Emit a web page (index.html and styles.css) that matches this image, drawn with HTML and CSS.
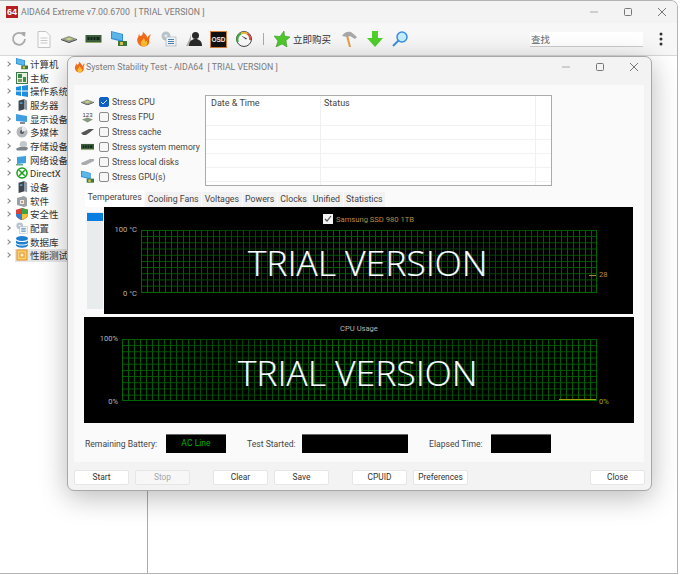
FILE: index.html
```html
<!DOCTYPE html>
<html lang="en">
<head>
    <meta charset="UTF-8">
    <meta name="viewport" content="width=device-width, initial-scale=1.0">
    <title>AIDA64 Extreme</title>
    <link rel="stylesheet" href="styles.css">
</head>
<body>
    <svg class="defs" width="0" height="0">
        <symbol id="flame" viewBox="0 0 16 16">
            <path d="M7 0C8 3 6 5 4 5 4 4 4 3 3 3 3 6 0 8 2 12c1 3 4 4 6 4 4 0 7-3 6-7 0-2 1-4 2-6-2 1-3 2-4 4 0-3-3-5-5-7z" fill="#f26a1b"/>
            <path d="M8 7c0 2-3 3-3 6 0 2 2 3 3 3 2 0 4-1 4-4 0-1 0-2-1-2 0 1-1 1-1 1 0-2-1-3-2-4z" fill="#fbc02d"/>
        </symbol>
        <symbol id="chip" viewBox="0 0 16 8">
            <path d="M0 4 8 1l8 3-8 3z" fill="#8f9a88"/>
            <path d="M4 4 8 2.500 12 4 8 5.500z" fill="#c8cf8a"/>
            <path d="M0 4l8 3 8-3v1L8 8 0 5z" fill="#3a3a3a"/>
        </symbol>
        <symbol id="ram" viewBox="0 0 16 8">
            <rect y="0" width="16" height="7" fill="#3c5f3c"/>
            <path d="M2 2h2v3H2zM5 2h2v3H5zM8 2h2v3H8zM11 2h3v3h-3z" fill="#15241a"/>
            <rect y="7" width="16" height="1" fill="#9aa86a"/>
        </symbol>
        <symbol id="monitor" viewBox="0 0 16 16">
            <path d="M0 0l12 3v8L0 8z" fill="#2f8fd6"/>
            <path d="M1 1l10 2.500v6L1 7z" fill="#5bb6ea"/>
            <rect x="7" y="10" width="9" height="5" fill="#3d7a3d"/>
            <rect x="9" y="11" width="3" height="3" fill="#d8c25a"/>
        </symbol>
        <symbol id="gear" viewBox="0 0 16 16">
            <circle cx="5" cy="5" r="4.500" fill="#b9c3cc"/>
            <circle cx="5" cy="5" r="1.500" fill="#eef1f3"/>
            <rect x="5" y="6" width="10" height="9" fill="#f4f6f8" stroke="#9fb0bd" stroke-width=".6"/>
            <path d="M7 8.500h6M7 10.500h6M7 12.500h6" stroke="#4a84b8"/>
        </symbol>
        <symbol id="box" viewBox="0 0 12 14">
            <path d="M2 2l7-2v12l-7 2z" fill="#3b4650"/>
            <path d="M9 0l3 2v11l-3-1z" fill="#8d99a3"/>
            <rect x="3.500" y="4" width="3" height="1.500" fill="#6cb6e8"/>
        </symbol>
    </svg>

    <div class="app">
        <header class="titlebar">
            <span class="logo">64</span>
            <span class="title-text">AIDA64 Extreme v7.00.6700&nbsp;&nbsp;[ TRIAL VERSION ]</span>
            <span class="controls">
                <svg width="10" height="10" viewBox="0 0 10 10"><path d="M1 5h8" stroke="#aaa"/></svg>
                <svg width="10" height="10" viewBox="0 0 10 10"><rect x="1.500" y="1.500" width="7" height="7" rx="1" fill="none" stroke="#777"/></svg>
                <svg width="10" height="10" viewBox="0 0 10 10"><path d="M1 1l8 8M9 1l-8 8" stroke="#777"/></svg>
            </span>
        </header>

        <nav class="toolbar">
            <span class="slot"><svg width="16" height="16" viewBox="0 0 16 16"><path d="M13 4.500A6 6 0 1 0 14 8" fill="none" stroke="#a9a9a9" stroke-width="1.800"/><path d="M10 1l4.500 0-.5 5z" fill="#a9a9a9"/></svg></span>
            <span class="slot"><svg width="14" height="17" viewBox="0 0 14 17"><path d="M1 .5h8l4 4v12H1z" fill="#fbfbfb" stroke="#c4c4c4"/><path d="M3.500 7h7M3.500 9.500h7M3.500 12h7" stroke="#c8c8c8"/></svg></span>
            <span class="slot"><svg width="16" height="8"><use href="#chip"/></svg></span>
            <span class="slot"><svg width="17" height="8"><use href="#ram"/></svg></span>
            <span class="slot"><svg width="16" height="16"><use href="#monitor"/></svg></span>
            <span class="slot"><svg width="15" height="16"><use href="#flame"/></svg></span>
            <span class="slot"><svg width="16" height="16"><use href="#gear"/></svg></span>
            <span class="slot"><svg width="16" height="14" viewBox="0 0 16 14"><path d="M5 2 3 8l-3 6h5z" fill="#b5b5b5"/><circle cx="9.500" cy="3.500" r="3.500" fill="#2a2a2a"/><path d="M3 14c0-5 3-7 6.500-7S16 9 16 14z" fill="#2a2a2a"/></svg></span>
            <span class="slot"><span class="osd">OSD</span></span>
            <span class="slot"><svg width="16" height="16" viewBox="0 0 16 16"><circle cx="8" cy="8" r="7.500" fill="#fafafa" stroke="#444"/><path d="M2 11A6.500 6.500 0 0 1 5 2.500" fill="none" stroke="#3fae3f" stroke-width="2"/><path d="M5 2.500A6.500 6.500 0 0 1 11.500 2.800" fill="none" stroke="#e8b23a" stroke-width="2"/><path d="M11.500 2.800A6.500 6.500 0 0 1 14 9" fill="none" stroke="#d8503a" stroke-width="2"/><path d="M5 4.500l6 3-1 1z" fill="#333"/></svg></span>
            <span class="tool-sep"></span>
            <svg class="star" width="16" height="16" viewBox="0 0 16 16"><path d="M10 0l.5 5 5.500 1-4 3.500L13 16l-5-3-6 3 2-6L0 5l6 .5z" fill="#4fc92c" stroke="#2f8a1a" stroke-width=".5"/></svg>
            <span class="buy">立即购买</span>
            <span class="slot"><svg width="15" height="16" viewBox="0 0 15 16"><path d="M4 5l2-1 3 12H7z" fill="#e2a24a"/><path d="M0 5c2-4 6-5 9-4l6 5-2 2-5-3-3 1z" fill="#a8a8a8"/></svg></span>
            <span class="slot"><svg width="16" height="16" viewBox="0 0 16 16"><path d="M5 0h6v7h5l-8 9-8-9h5z" fill="#4fcf2a"/></svg></span>
            <span class="slot"><svg width="16" height="16" viewBox="0 0 16 16"><circle cx="10" cy="6" r="5" fill="#c4eefc" stroke="#3b8fe0" stroke-width="1.500"/><path d="M6.500 9.500 1 15" stroke="#3b8fe0" stroke-width="2"/></svg></span>
            <input class="search" type="text" value="查找">
            <svg class="more" width="4" height="14" viewBox="0 0 4 14"><circle cx="2" cy="2" r="1.500"/><circle cx="2" cy="7" r="1.500"/><circle cx="2" cy="12" r="1.500"/></svg>
        </nav>

        <div class="workspace">
            <ul class="tree">
                <li><i class="chev"></i><svg width="12" height="12"><use href="#monitor"/></svg><span>计算机</span></li>
                <li><i class="chev"></i><svg width="12" height="12" viewBox="0 0 12 12"><rect x=".5" y=".5" width="11" height="11" fill="#e8f0e0" stroke="#3d7a4a"/><rect x="2" y="2" width="4" height="4" fill="#3d8a4a"/><rect x="7" y="5" width="3" height="5" fill="#3d8a4a"/><rect x="2" y="7" width="4" height="3" fill="#7a9a6a"/></svg><span>主板</span></li>
                <li><i class="chev"></i><svg width="12" height="12" viewBox="0 0 12 12"><path d="M0 2l5-1v4.500H0zM6 1l6-1v5.500H6zM0 6.500h5V11l-5-1zM6 6.500h6V12l-6-1z" fill="#1e8fe0"/></svg><span>操作系统</span></li>
                <li><i class="chev"></i><svg width="12" height="12"><use href="#box"/></svg><span>服务器</span></li>
                <li><i class="chev"></i><svg width="12" height="12" viewBox="0 0 12 12"><path d="M0 1l11 2v6L0 8z" fill="#3f9fe0"/><path d="M4 9h5v2H4z" fill="#888"/></svg><span>显示设备</span></li>
                <li><i class="chev"></i><svg width="12" height="12" viewBox="0 0 12 12"><circle cx="6" cy="6" r="5.500" fill="#b4b8bb"/><circle cx="6" cy="6" r="2" fill="#55595c"/><path d="M6 .5A5.500 5.500 0 0 1 11 4L6 6z" fill="#e6e8ea"/></svg><span>多媒体</span></li>
                <li><i class="chev"></i><svg width="12" height="12" viewBox="0 0 13 12"><ellipse cx="8" cy="4" rx="4" ry="3.500" fill="#c4c8cb"/><path d="M0 9l4-2h8l1 2-2 2H1z" fill="#7d8387"/></svg><span>存储设备</span></li>
                <li><i class="chev"></i><svg width="12" height="12" viewBox="0 0 12 12"><path d="M1 3l9-1v7l-9 1z" fill="#3f9fe0"/><path d="M0 10h7v1.500H0z" fill="#6a8"/></svg><span>网络设备</span></li>
                <li><i class="chev"></i><svg width="12" height="12" viewBox="0 0 13 13"><circle cx="6.500" cy="6.500" r="5.500" fill="#fff" stroke="#14a014" stroke-width="1.600"/><path d="M3.500 3.500l6 6M9.500 3.500l-6 6" stroke="#14a014" stroke-width="1.600"/></svg><span class="latin">DirectX</span></li>
                <li><i class="chev"></i><svg width="12" height="12"><use href="#box"/></svg><span>设备</span></li>
                <li><i class="chev"></i><svg width="12" height="12" viewBox="0 0 12 12"><path d="M1 3l7-2 3 2v8l-3 1-7-2z" fill="#9aa0a4"/><path d="M4 5h4v4H4z" fill="#e8eaec"/><path d="M5 6h2v2H5z" fill="#c96"/></svg><span>软件</span></li>
                <li><i class="chev"></i><svg width="12" height="12" viewBox="0 0 13 13"><path d="M6.500 0 13 2v5c0 3-3 5-6.500 6C3 12 0 10 0 7V2z" fill="#d8423a"/><path d="M6.500 0 13 2v4.500H6.500z" fill="#3fa33f"/><path d="M0 6.500h6.500V13C3 12 0 10 0 7z" fill="#2f7fd6"/><path d="M6.500 6.500H13c0 3-3 5.500-6.500 6.500z" fill="#f2c230"/></svg><span>安全性</span></li>
                <li><i class="chev"></i><svg width="12" height="12"><use href="#gear"/></svg><span>配置</span></li>
                <li><i class="chev"></i><svg width="12" height="12" viewBox="0 0 12 12"><ellipse cx="6" cy="2.500" rx="6" ry="2.500" fill="#1f7fd0"/><path d="M0 4.500c2 2 10 2 12 0V7c-2 2-10 2-12 0zM0 8c2 2 10 2 12 0v1.500c-2 3-10 3-12 0z" fill="#1f7fd0"/></svg><span>数据库</span></li>
                <li class="selected"><i class="chev"></i><svg width="12" height="12" viewBox="0 0 12 12"><rect x="1" y="1" width="10" height="10" fill="#f8d070" stroke="#e89020"/><rect x="4" y="4" width="4" height="4" fill="#fff3d0" stroke="#e89020"/></svg><span>性能测试</span></li>
            </ul>
            <main class="content"></main>
        </div>
    </div>

    <section class="dialog">
        <header class="dialog-title">
            <svg width="11" height="12"><use href="#flame"/></svg>
            <span class="title-text">System Stability Test - AIDA64&nbsp;&nbsp;[ TRIAL VERSION ]</span>
            <span class="controls">
                <svg width="10" height="10" viewBox="0 0 10 10"><path d="M1 5h8" stroke="#aaa"/></svg>
                <svg width="10" height="10" viewBox="0 0 10 10"><rect x="1.500" y="1.500" width="7" height="7" rx="1" fill="none" stroke="#777"/></svg>
                <svg width="10" height="10" viewBox="0 0 10 10"><path d="M1 1l8 8M9 1l-8 8" stroke="#777"/></svg>
            </span>
        </header>

        <div class="panel">
            <div class="top-row">
                <ul class="stress-list">
                    <li><svg width="13" height="7"><use href="#chip"/></svg><b class="check on"><svg width="8" height="8" viewBox="0 0 8 8"><path d="M1 4l2 2 4-4" fill="none" stroke="#cfe6fa"/></svg></b><span>Stress CPU</span></li>
                    <li><svg width="13" height="13" viewBox="0 0 13 13"><text x="6.500" y="6" class="num">123</text><path d="M1 9l5.500-2L12 9l-5.500 3z" fill="#8a9a80"/></svg><b class="check"></b><span>Stress FPU</span></li>
                    <li><svg width="13" height="6" viewBox="0 0 13 6"><path d="M0 4l8-4h5L8 4l-3 2H2z" fill="#555"/></svg><b class="check"></b><span>Stress cache</span></li>
                    <li><svg width="13" height="7"><use href="#ram"/></svg><b class="check"></b><span>Stress system memory</span></li>
                    <li><svg width="13" height="6" viewBox="0 0 13 6"><path d="M0 4l9-4h4v2L5 6H1z" fill="#a8acaf"/></svg><b class="check"></b><span>Stress local disks</span></li>
                    <li><svg width="13" height="13"><use href="#monitor"/></svg><b class="check"></b><span>Stress GPU(s)</span></li>
                </ul>
                <div class="log">
                    <div class="log-head"><span class="col-date">Date &amp; Time</span><span>Status</span></div>
                </div>
            </div>

            <div class="tabs">
                <span class="tab active">Temperatures</span>
                <span class="tab">Cooling Fans</span>
                <span class="tab">Voltages</span>
                <span class="tab">Powers</span>
                <span class="tab">Clocks</span>
                <span class="tab">Unified</span>
                <span class="tab">Statistics</span>
            </div>

            <div class="temp-row">
                <div class="scroller"><span class="scroller-thumb"></span></div>
                <div class="chart chart-temp">
                    <div class="chart-title temp-title">
                        <b class="mini-check"><svg width="8" height="8" viewBox="0 0 8 8"><path d="M1 4l2 2 4-5" fill="none" stroke="#555" stroke-width="1.200"/></svg></b>
                        <span>Samsung SSD 980 1TB</span>
                    </div>
                    <div class="plot-row">
                        <div class="axis"><span>100 °C</span><span>0 °C</span></div>
                        <div class="plot"><span class="trial">TRIAL VERSION</span><i class="mark-temp"></i></div>
                        <div class="side side-temp">28</div>
                    </div>
                </div>
            </div>

            <div class="chart chart-cpu">
                <div class="chart-title">CPU Usage</div>
                <div class="plot-row">
                    <div class="axis"><span>100%</span><span>0%</span></div>
                    <div class="plot"><span class="trial">TRIAL VERSION</span><i class="mark-cpu"></i></div>
                    <div class="side side-cpu">0%</div>
                </div>
            </div>

            <div class="status-row">
                <label class="l-battery">Remaining Battery:</label><span class="readout r-battery">AC Line</span>
                <label class="l-started">Test Started:</label><span class="readout r-started"></span>
                <label class="l-elapsed">Elapsed Time:</label><span class="readout r-elapsed"></span>
            </div>
        </div>

        <footer class="button-row">
            <button>Start</button>
            <button disabled>Stop</button>
            <button class="group-start">Clear</button>
            <button>Save</button>
            <button class="group-start">CPUID</button>
            <button>Preferences</button>
            <button class="close-btn">Close</button>
        </footer>
    </section>
</body>
</html>
```

FILE: styles.css
```css
* {
    box-sizing: border-box;
}
html, body {
    margin: 0;
    height: 100%;
    overflow: hidden;
}
body {
    width: 680px;
    height: 575px;
    background-color: #fff;
    color: #444;
    font-family: Roboto, "Noto Sans CJK SC", sans-serif;
    font-size: 8.600px;
    position: relative;
}
ul {
    list-style: none;
    margin: 0;
    padding: 0;
}
svg {
    display: block;
    flex: none;
}
.defs {
    position: absolute;
}

/* main window */
.app {
    width: 678px;
    height: 574px;
    border: 1px solid #b4b4b4;
    border-left: none;
    border-radius: 0 7px 0 0;
    display: flex;
    flex-direction: column;
    overflow: hidden;
}
.titlebar {
    height: 22px;
    flex: none;
    background-color: #f3f3f3;
    display: flex;
    align-items: center;
    padding: 0 0 1px 6px;
}
.logo {
    width: 12px;
    height: 12px;
    background-color: #b3201f;
    color: #fff;
    font-family: "Liberation Sans", sans-serif;
    font-size: 9px;
    font-weight: bold;
    line-height: 12px;
    text-align: center;
    margin-right: 3px;
}
.title-text {
    color: #7a7a7a;
    font-size: 8.750px;
    white-space: nowrap;
}
.controls {
    margin-left: auto;
    display: flex;
    gap: 24px;
    padding-right: 10px;
}
.toolbar {
    height: 33px;
    flex: none;
    background-color: #f7f7f7;
    border-bottom: 1px solid #d8d8d8;
    display: flex;
    align-items: center;
    padding-left: 6px;
}
.slot {
    width: 25px;
    flex: none;
    display: flex;
    justify-content: center;
    align-items: center;
}
.osd {
    width: 17px;
    height: 17px;
    background-color: #111;
    border: 1px solid #d8813a;
    color: #eee;
    font-family: "Liberation Sans", sans-serif;
    font-size: 6.500px;
    font-weight: bold;
    line-height: 15px;
    text-align: center;
}
.tool-sep {
    width: 1px;
    height: 12px;
    background-color: #aaa;
    margin: 0 10px 0 7px;
}
.star {
    margin-right: 3px;
}
.buy {
    font-family: "Noto Sans CJK SC", sans-serif;
    font-size: 9.500px;
    color: #333;
    width: 44px;
    white-space: nowrap;
}
.search {
    width: 113px;
    height: 15px;
    margin-left: 118px;
    border: none;
    border-bottom: 1px solid #ccc;
    padding: 0 1px;
    background-color: #fff;
    color: #666;
    font-family: "Noto Sans CJK SC", sans-serif;
    font-size: 9.500px;
}
.more {
    margin-left: 16px;
    fill: #333;
}
.workspace {
    flex: 1;
    display: flex;
}
.tree {
    width: 148px;
    flex: none;
    padding-top: 1px;
    background-color: #fff;
    border-right: 1px solid #aaa;
}
.tree li {
    height: 13.700px;
    display: flex;
    align-items: center;
    gap: 2px;
    padding-left: 6px;
    color: #333;
    font-family: "Noto Sans CJK SC", sans-serif;
    font-size: 9.500px;
    white-space: nowrap;
}
.tree .latin {
    font-family: Roboto, sans-serif;
    font-size: 9.500px;
}
.tree .selected {
    background: linear-gradient(#e6e6e6, #e6e6e6) 15px 0 / 60px 100% no-repeat;
}
.chev {
    width: 4px;
    height: 4px;
    border-top: 1px solid #888;
    border-right: 1px solid #888;
    transform: rotate(45deg);
    margin-right: 4px;
    flex: none;
}
.content {
    flex: 1;
    background-color: #fff;
}

/* stability test window */
.dialog {
    position: absolute;
    left: 67px;
    top: 56px;
    width: 585px;
    height: 435px;
    background-color: #f3f3f3;
    border: 1px solid #a8a8a8;
    border-radius: 7px;
    box-shadow: 0 6px 28px rgba(0, 0, 0, 0.28);
    padding: 0 6px;
    display: flex;
    flex-direction: column;
}
.dialog-title {
    height: 28px;
    flex: none;
    display: flex;
    align-items: center;
    gap: 1px;
    padding-bottom: 9px;
}
.dialog-title .controls {
    padding-right: 6px;
}
.panel {
    height: 377px;
    flex: none;
    background-color: #fafafa;
    padding: 10px 11px 0;
    margin-right: 1px;
}
.top-row {
    display: flex;
    height: 95px;
}
.stress-list {
    width: 120px;
    flex: none;
}
.stress-list li {
    height: 15px;
    display: flex;
    align-items: center;
    white-space: nowrap;
    position: relative;
    top: -1px;
    padding-left: 14px;
}
.stress-list li > svg {
    position: absolute;
    left: -4px;
    top: 50%;
    transform: translateY(-50%);
}
.num {
    font-family: "Liberation Sans", sans-serif;
    font-size: 6px;
    fill: #444;
    text-anchor: middle;
}
.check {
    width: 10px;
    height: 10px;
    border: 1px solid #8a8a8a;
    border-radius: 2px;
    background-color: #f6f6f6;
    margin-right: 3px;
    flex: none;
}
.check.on {
    background-color: #0f62c4;
    border-color: #0f62c4;
}
.log {
    width: 347px;
    height: 91px;
    background-color: #fff;
    border: 1px solid #ababab;
    background-image: linear-gradient(90deg, transparent 114px, #f0f0f0 114px, #f0f0f0 115px, transparent 115px, transparent 329px, #f0f0f0 329px, #f0f0f0 330px, transparent 330px),
        repeating-linear-gradient(#fff 0, #fff 13px, #f2f2f2 13px, #f2f2f2 14px);
    background-position: 0 0, 0 16px;
    background-repeat: no-repeat;
}
.log-head {
    display: flex;
    padding: 2px 0 0 5px;
    font-size: 9px;
}
.col-date {
    width: 113px;
}
.tabs {
    display: flex;
    align-items: flex-end;
    height: 17px;
    gap: 1px;
}
.tab {
    height: 15px;
    line-height: 15px;
    padding: 0 2.500px;
    background-color: #f2f2f2;
    color: #444;
    font-size: 8.800px;
    white-space: nowrap;
}
.tab.active {
    height: 17px;
    line-height: 15px;
    background-color: #fff;
}
.temp-row {
    display: flex;
    align-items: center;
    margin-left: 19px;
    position: relative;
}
.scroller {
    position: absolute;
    left: -17px;
    top: 5px;
    width: 16px;
    height: 97px;
    background-color: #e8ecec;
}
.scroller-thumb {
    display: block;
    height: 8px;
    margin: 1px 0;
    background-color: #0a7ee0;
}

/* charts */
.chart {
    background-color: #000;
    color: #b5b5b5;
    font-size: 7.600px;
}
.chart-temp {
    width: 530px;
    height: 107px;
}
.chart-cpu {
    width: 550px;
    height: 106px;
    margin: 3px 0 0 -1px;
}
.chart-title {
    height: 22px;
    display: flex;
    align-items: center;
    justify-content: center;
    gap: 3px;
    padding-top: 1px;
}
.temp-title {
    height: 23px;
    color: #b98a45;
}
.mini-check {
    width: 10px;
    height: 10px;
    background-color: #f3f3f3;
    padding: 1px;
}
.plot-row {
    display: flex;
}
.chart-temp .plot-row {
    height: 63px;
}
.chart-cpu .plot-row {
    height: 62px;
}
.chart-temp .plot {
    width: 456px;
}
.chart-cpu .plot {
    width: 475px;
}
.plot {
    flex: none;
    display: flex;
    align-items: center;
    justify-content: center;
    position: relative;
    background-image: linear-gradient(90deg, transparent, rgba(0, 0, 0, 0.3) 25%, transparent 45%, rgba(0, 0, 0, 0.3) 75%, transparent),
        linear-gradient(#006600 1px, transparent 1px),
        linear-gradient(90deg, #006600 1px, transparent 1px);
    background-size: 100% 100%, 6px 6.200px, 6px 6.200px;
    border-right: 1px solid #006600;
    border-bottom: 1px solid #006600;
}
.axis {
    width: 37px;
    flex: none;
    margin: -5px 0;
    padding-right: 4px;
    display: flex;
    flex-direction: column;
    justify-content: space-between;
    align-items: flex-end;
}
.chart-cpu .axis {
    width: 38px;
}
.trial {
    color: #fff;
    font-family: "Open Sans", sans-serif;
    font-size: 35.500px;
    font-weight: 300;
    line-height: 1;
    white-space: nowrap;
    text-shadow: 1px 0 rgba(90, 170, 220, 0.5);
}
.chart-cpu .trial {
    margin: 6px 3px 0 0;
}
.chart-temp .trial {
    margin: 4px 2px 0 0;
}
.mark-temp, .mark-cpu {
    position: absolute;
    height: 1px;
    right: 0;
}
.mark-temp {
    width: 7px;
    top: 45px;
    background-color: #a8803f;
}
.mark-cpu {
    width: 37px;
    bottom: 0;
    background-color: #a0a000;
}
.side {
    padding-left: 2px;
}
.side-temp {
    padding-top: 40px;
    color: #b98a45;
}
.side-cpu {
    padding-top: 58px;
    color: #a0a000;
}

/* status and buttons */
.status-row {
    display: flex;
    align-items: center;
    height: 19px;
    margin-top: 11px;
    white-space: nowrap;
}
.l-battery {
    width: 81px;
}
.l-started {
    width: 55px;
    margin-left: 21px;
}
.l-elapsed {
    width: 62px;
    margin-left: 21px;
}
.readout {
    height: 19px;
    background-color: #000;
    border-top: 1px solid #666;
    color: #00b000;
    text-align: center;
    line-height: 17px;
}
.r-battery, .r-elapsed {
    width: 60px;
}
.r-started {
    width: 106px;
}
.button-row {
    display: flex;
    gap: 6px;
    margin-top: 8px;
}
button {
    width: 55px;
    height: 15px;
    padding: 0;
    background-color: #fff;
    border: 1px solid #e6e6e6;
    border-radius: 2px;
    color: #333;
    font-family: Roboto, sans-serif;
    font-size: 8.400px;
    line-height: 13px;
}
button:disabled {
    background-color: #f7f7f7;
    color: #a8a8a8;
}
.group-start {
    margin-left: 17px;
}
.close-btn {
    margin-left: auto;
}
```
